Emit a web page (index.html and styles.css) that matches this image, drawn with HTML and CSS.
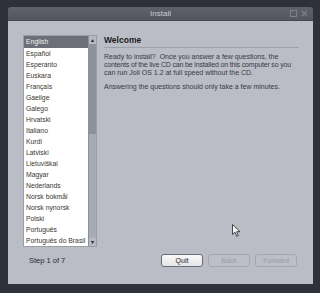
FILE: index.html
```html
<!DOCTYPE html>
<html>
<head>
<meta charset="utf-8">
<link rel="stylesheet" href="styles.css">
</head>
<body>
<div class="window">
  <div class="titlebar">
    <span class="title">Install</span>
    <span class="wbtns">
      <svg width="7" height="7" viewBox="0 0 7 7"><rect x="0.5" y="0.5" width="6" height="6" fill="none" stroke="#7e8089" stroke-width="1"/></svg>
      <svg width="7" height="7" viewBox="0 0 7 7"><path d="M1 1L6 6M6 1L1 6" stroke="#7e8089" stroke-width="1.2"/></svg>
    </span>
  </div>
  <div class="content">
    <div class="main">
      <div class="listwrap">
        <ul class="list">
          <li class="sel">English</li>
          <li>Español</li>
          <li>Esperanto</li>
          <li>Euskara</li>
          <li>Français</li>
          <li>Gaeilge</li>
          <li>Galego</li>
          <li>Hrvatski</li>
          <li>Italiano</li>
          <li>Kurdî</li>
          <li>Latviski</li>
          <li>Lietuviškai</li>
          <li>Magyar</li>
          <li>Nederlands</li>
          <li>Norsk bokmål</li>
          <li>Norsk nynorsk</li>
          <li>Polski</li>
          <li>Português</li>
          <li>Português do Brasil</li>
        </ul>
        <div class="scroll">
          <div class="arrow">&#9652;</div>
          <div class="thumb"></div>
          <div class="track"></div>
          <div class="arrow">&#9662;</div>
        </div>
      </div>
      <div class="panel">
        <h1 class="heading">Welcome</h1>
        <p class="para"><span class="ln">Ready to install?&nbsp; Once you answer a few questions, the</span><span class="ln tight">contents of the live CD can be installed on this computer so you</span><span class="ln">can run Joli OS 1.2 at full speed without the CD.</span></p>
        <p class="para"><span class="ln">Answering the questions should only take a few minutes.</span></p>
      </div>
    </div>
    <div class="footer">
      <span class="step">Step 1 of 7</span>
      <div class="buttons">
        <button class="btn">Quit</button>
        <button class="btn dis">Back</button>
        <button class="btn dis">Forward</button>
      </div>
    </div>
    <svg class="cursor" width="9" height="13" viewBox="0 0 9 13"><path d="M0.5 0.5L0.5 10.5L3 8.2L4.8 12.3L6.3 11.6L4.6 7.7L8 7.7Z" fill="#f4f4f4" stroke="#222" stroke-width="0.8"/></svg>
  </div>
</div>
</body>
</html>
```

FILE: styles.css
```css
html, body {
  margin: 0;
  padding: 0;
  background: #2e303a;
  width: 320px;
  height: 293px;
  overflow: hidden;
  font-family: "Liberation Sans", Arial, sans-serif;
}
.window {
  margin: 7px 0 0 8px;
  width: 305px;
  height: 277px;
  display: flex;
  flex-direction: column;
  border-radius: 3px 3px 0 0;
  overflow: hidden;
}
.titlebar {
  height: 13px;
  background: linear-gradient(#5f616b, #54565f);
  border-bottom: 1px solid #45474f;
  display: flex;
  align-items: center;
  justify-content: center;
  position: relative;
}
.title {
  color: #c8cad2;
  font-size: 8px;
}
.wbtns {
  position: absolute;
  right: 5px;
  top: 3px;
  display: flex;
  gap: 4px;
}
.wbtns svg { display: block; }
.content {
  flex: 1;
  background: #babcc6;
  position: relative;
  display: flex;
  flex-direction: column;
  padding: 14px 14px 0 15px;
}
.main {
  display: flex;
  gap: 7px;
}
.listwrap {
  display: flex;
  height: 210px;
  border: 1px solid #9a9ca6;
  background: #ffffff;
}
.list {
  list-style: none;
  margin: 0;
  padding: 0;
  width: 64px;
  overflow: hidden;
}
.list li {
  height: 11px;
  line-height: 11px;
  font-size: 6.8px;
  color: #3a3630;
  padding-left: 2px;
  white-space: nowrap;
}
.list li.sel {
  background: #6c6e78;
  color: #f2f2f2;
  height: 12px;
  line-height: 12px;
}
.scroll {
  width: 7px;
  background: #a9abb4;
  border-left: 1px solid #8e9099;
  display: flex;
  flex-direction: column;
}
.arrow {
  height: 8px;
  font-size: 6px;
  line-height: 8px;
  text-align: center;
  color: #222;
  background: #b8bac3;
}
.thumb {
  height: 90px;
  background: #8f919a;
}
.track {
  flex: 1;
  background: #a9abb4;
}
.panel {
  width: 196px;
}
.heading {
  margin: 0;
  font-size: 8.5px;
  font-weight: bold;
  color: #1c1c20;
  padding: 0 0 2px 0;
  border-bottom: 1px solid #9ea0aa;
}
.para {
  margin: 5px 0 0 0;
  font-size: 7px;
  line-height: 8px;
  color: #3a3a3e;
}
.ln {
  display: block;
  white-space: nowrap;
}
.ln.tight {
  letter-spacing: -0.16px;
}
.para + .para {
  margin-top: 6px;
}
.footer {
  display: flex;
  align-items: center;
  justify-content: space-between;
  margin-top: 7px;
  padding-left: 6px;
  padding-right: 2px;
}
.step {
  font-size: 7.5px;
  color: #2a2a30;
}
.buttons {
  display: flex;
  gap: 5px;
}
.btn {
  width: 42px;
  height: 13px;
  padding: 0;
  font-family: "Liberation Sans", Arial, sans-serif;
  font-size: 7px;
  border-radius: 3px;
  border: 1px solid #6a6c74;
  background: linear-gradient(#fafafa, #e4e4e8);
  color: #1a1a1a;
}
.btn.dis {
  border-color: #a5a7b0;
  background: #bcbec8;
  color: #9b9da6;
}
.cursor {
  position: absolute;
  left: 224px;
  top: 203px;
}
```
